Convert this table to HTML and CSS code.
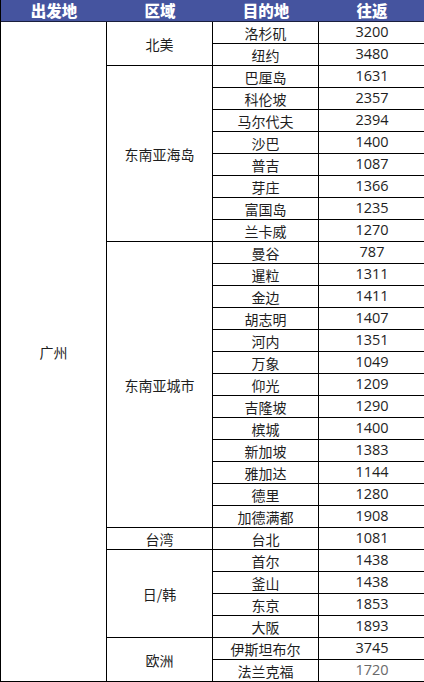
FILE: index.html
```html
<!DOCTYPE html>
<html lang="zh">
<head>
<meta charset="utf-8">
<link rel="stylesheet" href="styles.css">
</head>
<body>
<div class="table">
  <div class="th">出发地</div>
  <div class="th">区域</div>
  <div class="th">目的地</div>
  <div class="th">往返</div>

  <div class="cell origin span30">广州</div>

  <div class="cell region span2">北美</div>
  <div class="cell">洛杉矶</div><div class="cell num">3200</div>
  <div class="cell">纽约</div><div class="cell num">3480</div>

  <div class="cell region span8">东南亚海岛</div>
  <div class="cell">巴厘岛</div><div class="cell num">1631</div>
  <div class="cell">科伦坡</div><div class="cell num">2357</div>
  <div class="cell">马尔代夫</div><div class="cell num">2394</div>
  <div class="cell">沙巴</div><div class="cell num">1400</div>
  <div class="cell">普吉</div><div class="cell num">1087</div>
  <div class="cell">芽庄</div><div class="cell num">1366</div>
  <div class="cell">富国岛</div><div class="cell num">1235</div>
  <div class="cell">兰卡威</div><div class="cell num">1270</div>

  <div class="cell region span13">东南亚城市</div>
  <div class="cell">曼谷</div><div class="cell num">787</div>
  <div class="cell">暹粒</div><div class="cell num">1311</div>
  <div class="cell">金边</div><div class="cell num">1411</div>
  <div class="cell">胡志明</div><div class="cell num">1407</div>
  <div class="cell">河内</div><div class="cell num">1351</div>
  <div class="cell">万象</div><div class="cell num">1049</div>
  <div class="cell">仰光</div><div class="cell num">1209</div>
  <div class="cell">吉隆坡</div><div class="cell num">1290</div>
  <div class="cell">槟城</div><div class="cell num">1400</div>
  <div class="cell">新加坡</div><div class="cell num">1383</div>
  <div class="cell">雅加达</div><div class="cell num">1144</div>
  <div class="cell">德里</div><div class="cell num">1280</div>
  <div class="cell">加德满都</div><div class="cell num">1908</div>

  <div class="cell region">台湾</div>
  <div class="cell">台北</div><div class="cell num">1081</div>

  <div class="cell region span4">日/韩</div>
  <div class="cell">首尔</div><div class="cell num">1438</div>
  <div class="cell">釜山</div><div class="cell num">1438</div>
  <div class="cell">东京</div><div class="cell num">1853</div>
  <div class="cell">大阪</div><div class="cell num">1893</div>

  <div class="cell region span2">欧洲</div>
  <div class="cell">伊斯坦布尔</div><div class="cell num">3745</div>
  <div class="cell">法兰克福</div><div class="cell num faded">1720</div>
</div>
</body>
</html>
```
FILE: styles.css
```css
html, body {
  margin: 0;
  padding: 0;
  background: #ffffff;
}

.table {
  display: grid;
  grid-template-columns: 106px 106px 106px 106px;
  grid-auto-rows: 22px;
  width: 424px;
  font-family: "Noto Sans CJK SC", "Noto Sans", sans-serif;
  color: #1e1e1e;
  border-left: 1px solid #000;
  box-sizing: border-box;
}

.th {
  background: #45549f;
  color: #ffffff;
  font-weight: 900;
  font-size: 15.5px;
  display: flex;
  align-items: center;
  justify-content: center;
  border-bottom: 1px solid #1a1f3c;
  box-sizing: border-box;
  line-height: 1;
}

.cell {
  display: flex;
  align-items: center;
  justify-content: center;
  font-size: 14px;
  line-height: 1;
  border-right: 1px solid #000;
  border-bottom: 1px solid #000;
  box-sizing: border-box;
}

.num {
  font-family: "Open Sans", "Noto Sans", sans-serif;
  font-size: 14.5px;
  border-right: none;
}

.faded {
  color: #6a6a6a;
}

.origin { grid-row: span 30; }
.span2 { grid-row: span 2; }
.span4 { grid-row: span 4; }
.span8 { grid-row: span 8; }
.span13 { grid-row: span 13; }
```
